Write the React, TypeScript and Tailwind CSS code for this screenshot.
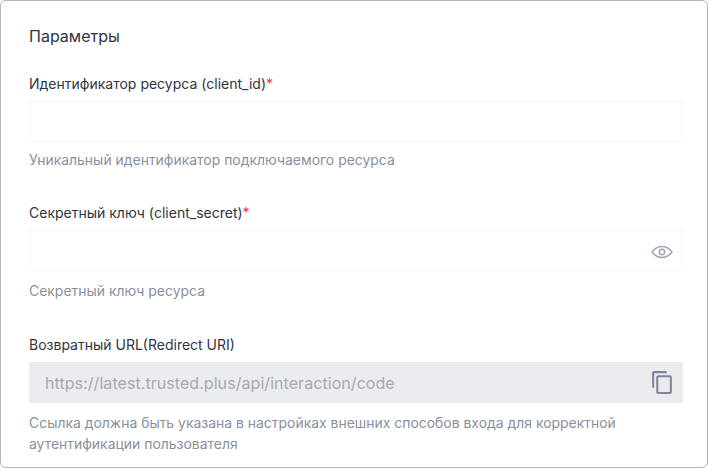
function Label({ text, required }: { text: string; required?: boolean }) {
  return (
    <div className="h-[20px] text-[14px] leading-[20px] text-[#2f3542]">
      {text}
      {required && <span className="text-[#e5344b]">*</span>}
    </div>
  );
}

function Hint({ children }: { children: React.ReactNode }) {
  return <p className="text-[13.950px] leading-[21px] text-[#8a8f9e]">{children}</p>;
}

function EyeIcon() {
  return (
    <svg width="22" height="22" viewBox="0 -1 22 22" fill="none" stroke="#a3a6b8" strokeWidth="1.5">
      <path d="M1 11C3.700 7.300 7 5.500 11 5.500s7.300 1.800 10 5.500c-2.700 3.700-6 5.500-10 5.500S3.700 14.700 1 11Z" />
      <circle cx="11" cy="11" r="2.700" />
    </svg>
  );
}

function CopyIcon() {
  return (
    <svg width="25" height="25" viewBox="0 0 24 24" fill="#80859b">
      <path d="M16 1H4c-1.100 0-2 .9-2 2v14h2V3h12V1zm3 4H8c-1.100 0-2 .9-2 2v14c0 1.100.9 2 2 2h11c1.100 0 2-.9 2-2V7c0-1.100-.9-2-2-2zm0 16H8V7h11v14z" />
    </svg>
  );
}

export default function App() {
  return (
    <div className="h-[469px] w-[709px] bg-white" style={{ fontFamily: "Inter, 'Noto Sans', sans-serif" }}>
      <div className="h-[468px] w-[708px] overflow-hidden rounded-[6px] border border-[#b5b5b5] pl-[28px] pr-[24px] pt-[24px]">
        <h2 className="h-[22px] text-[16px] font-normal leading-[22px] text-[#2f3542]">Параметры</h2>

        <div className="mt-[27px]">
          <Label text="Идентификатор ресурса (client_id)" required />
          <div className="mt-[7px] h-[41px] rounded-[2px] border border-[#f6f6f8]" />
          <div className="mt-[7px]">
            <Hint>Уникальный идентификатор подключаемого ресурса</Hint>
          </div>
        </div>

        <div className="mt-[33px]">
          <Label text="Секретный ключ (client_secret)" required />
          <div className="mt-[7px] flex h-[41px] items-center justify-end rounded-[2px] border border-[#f6f6f8] pr-[9px]">
            <EyeIcon />
          </div>
          <div className="mt-[9px]">
            <Hint>Секретный ключ ресурса</Hint>
          </div>
        </div>

        <div className="mt-[34px]">
          <Label text="Возвратный URL(Redirect URI)" />
          <div className="mt-[7px] flex h-[41px] items-center justify-between rounded-[2px] bg-[#ebecf0] pl-[16px] pr-[8px]">
            <span className="text-[16px] tracking-[0.06px] text-[#a8a9ad]">https://latest.trusted.plus/api/interaction/code</span>
            <CopyIcon />
          </div>
          <div className="mt-[9px]">
            <Hint>
              Ссылка должна быть указана в настройках внешних способов входа для корректной
              <br />
              аутентификации пользователя
            </Hint>
          </div>
        </div>
      </div>
    </div>
  );
}
